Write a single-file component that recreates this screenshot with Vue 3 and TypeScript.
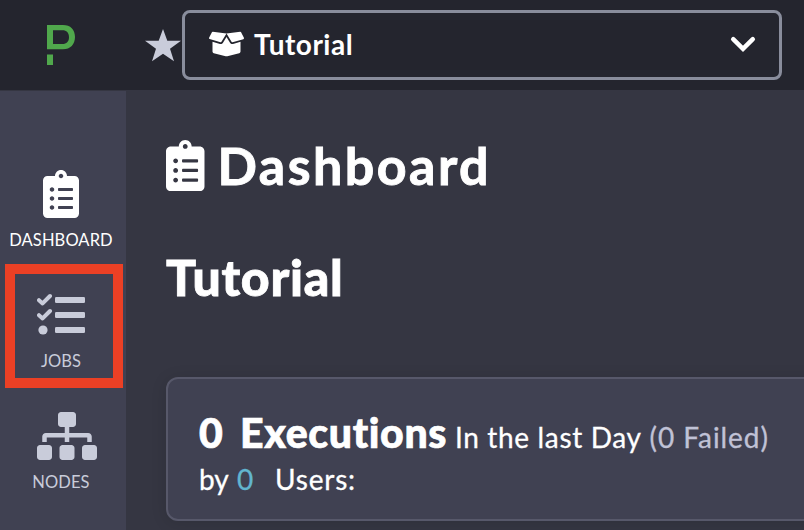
<script setup lang="ts">
interface Shape {
  viewBox: string
  path: string
}

const clipboard: Shape = {
  viewBox: '0 0 384 512',
  path: 'M336 64h-80c0-35.3-28.7-64-64-64s-64 28.7-64 64H48C21.5 64 0 85.5 0 112v352c0 26.5 21.5 48 48 48h288c26.5 0 48-21.5 48-48V112c0-26.5-21.5-48-48-48zM96 424c-13.3 0-24-10.7-24-24s10.7-24 24-24 24 10.7 24 24-10.7 24-24 24zm0-96c-13.3 0-24-10.7-24-24s10.7-24 24-24 24 10.7 24 24-10.7 24-24 24zm0-96c-13.3 0-24-10.7-24-24s10.7-24 24-24 24 10.7 24 24-10.7 24-24 24zm96-192c13.3 0 24 10.7 24 24s-10.7 24-24 24-24-10.7-24-24 10.7-24 24-24zm128 368c0 4.4-3.6 8-8 8H168c-4.4 0-8-3.6-8-8v-16c0-4.4 3.6-8 8-8h144c4.4 0 8 3.6 8 8v16zm0-96c0 4.4-3.6 8-8 8H168c-4.4 0-8-3.6-8-8v-16c0-4.4 3.6-8 8-8h144c4.4 0 8 3.6 8 8v16zm0-96c0 4.4-3.6 8-8 8H168c-4.4 0-8-3.6-8-8v-16c0-4.4 3.6-8 8-8h144c4.4 0 8 3.6 8 8v16z',
}

const sitemap: Shape = {
  viewBox: '0 0 640 512',
  path: 'M128 352H32c-17.67 0-32 14.33-32 32v96c0 17.67 14.33 32 32 32h96c17.67 0 32-14.33 32-32v-96c0-17.67-14.33-32-32-32zm-24-80h192v48h48v-48h192v48h48v-57.59c0-21.17-17.23-38.41-38.41-38.41H344v-64h40c17.67 0 32-14.33 32-32V32c0-17.67-14.33-32-32-32H256c-17.67 0-32 14.33-32 32v96c0 17.67 14.33 32 32 32h40v64H94.41C73.23 224 56 241.23 56 262.41V320h48v-48zm264 80h-96c-17.67 0-32 14.33-32 32v96c0 17.67 14.33 32 32 32h96c17.67 0 32-14.33 32-32v-96c0-17.67-14.33-32-32-32zm240 0h-96c-17.67 0-32 14.33-32 32v96c0 17.67 14.33 32 32 32h96c17.67 0 32-14.33 32-32v-96c0-17.67-14.33-32-32-32z',
}

const boxOpen: Shape = {
  viewBox: '0 0 640 512',
  path: 'M425.7 256c-16.9 0-32.8-9-41.4-23.4L320 126l-64.2 106.6c-8.7 14.5-24.6 23.5-41.5 23.5-4.5 0-9-.6-13.3-1.9L64 215v178c0 14.7 10 27.5 24.2 31l216.2 54.1c10.2 2.5 20.9 2.5 31 0L551.8 424c14.2-3.6 24.2-16.4 24.2-31V215l-137 39.1c-4.3 1.3-8.8 1.9-13.3 1.9zm212.6-112.2L586.8 41c-3.1-6.2-9.8-9.8-16.7-8.9L320 64l91.7 152.1c3.8 6.3 11.4 9.3 18.5 7.3l197.9-56.5c9.9-2.9 14.7-13.9 10.2-23.1zM53.2 41L1.7 143.8c-4.6 9.2.3 20.2 10.1 23l197.9 56.5c7.1 2 14.7-1 18.5-7.3L320 64 69.8 32.1c-6.9-.8-13.5 2.7-16.6 8.9z',
}

const project = 'Tutorial'
const executions = 0
const failed = 0
const users = 0
</script>

<template>
  <div class="app">
    <header class="topbar">
      <svg class="logo" viewBox="0 0 28 40">
        <path fill-rule="evenodd" d="M0 0H16C23.500 0 28 4.700 28 12S23.500 24.300 16 24.300H0ZM6 5.300V19H15.500C19.500 19 22 16.500 22 12.200S19.500 5.300 15.500 5.300Z" />
        <rect x="0" y="29.500" width="6" height="10.500" />
      </svg>
      <svg class="star" viewBox="0 0 36 33">
        <path d="M18 0L22.300 11.700H36L25 19.800L29 32.300L18 24.800L7 32.300L11 19.800L0 11.700H13.700Z" />
      </svg>
      <button class="select" type="button">
        <svg class="box-icon" :viewBox="boxOpen.viewBox"><path :d="boxOpen.path" /></svg>
        <span class="select-text">{{ project }}</span>
        <svg class="chevron" viewBox="0 0 26 18"><path d="M3.200 3.200L13 12.800L22.800 3.200" /></svg>
      </button>
    </header>
    <div class="body">
      <nav class="sidebar">
        <a class="item dashboard">
          <svg class="clip" :viewBox="clipboard.viewBox"><path :d="clipboard.path" /></svg>
          <span class="label">DASHBOARD</span>
        </a>
        <a class="item jobs">
          <svg class="tasks" viewBox="0 0 48 42">
            <path class="tick" d="M2 7.200L5.600 10.400L13 3" />
            <path class="tick" d="M2 22.200L5.600 25.400L13 18" />
            <circle cx="6" cy="37" r="4.600" />
            <rect x="18" y="4" width="30" height="6" rx="1.300" />
            <rect x="18" y="19" width="30" height="6" rx="1.300" />
            <rect x="18" y="34" width="30" height="6" rx="1.300" />
          </svg>
          <span class="label">JOBS</span>
        </a>
        <a class="item nodes">
          <svg class="tree" :viewBox="sitemap.viewBox"><path :d="sitemap.path" /></svg>
          <span class="label">NODES</span>
        </a>
      </nav>
      <main class="content">
        <h1 class="title">
          <svg class="title-icon" :viewBox="clipboard.viewBox"><path :d="clipboard.path" /></svg>
          <span>Dashboard</span>
        </h1>
        <h2 class="project">{{ project }}</h2>
        <section class="card">
          <div class="line first">
            <span class="count">{{ executions }}</span>
            <span class="executions">Executions</span>
            <span class="period">In the last Day</span>
            <span class="failed">({{ failed }} Failed)</span>
          </div>
          <div class="line second">
            <span class="by">by</span>
            <span class="users-count">{{ users }}</span>
            <span class="users">Users:</span>
          </div>
        </section>
      </main>
    </div>
  </div>
</template>

<style>
body {
  overflow: hidden;
  background: #353642;
}
</style>

<style scoped>
.app {
  display: flex;
  flex-direction: column;
  width: 804px;
  height: 530px;
  overflow: hidden;
  font-family: Lato, "Open Sans", sans-serif;
  font-variant-ligatures: none;
  color: #fff;
  background: #353642;
}
svg {
  display: block;
  flex: none;
  fill: currentColor;
}
.topbar {
  display: flex;
  flex: none;
  height: 90px;
  box-sizing: border-box;
  padding: 10px 0 0 47px;
  background: #24252e;
}
.logo {
  width: 28px;
  height: 40px;
  margin-top: 15px;
  color: #50a84c;
}
.star {
  width: 36px;
  height: 33px;
  margin: 19px 1px 0 70px;
  color: #c9ccda;
}
.select {
  display: flex;
  align-items: flex-start;
  width: 600px;
  height: 70px;
  box-sizing: border-box;
  padding: 0 23px 0 24px;
  border: 3px solid #898d9c;
  border-radius: 8px;
  color: #fff;
  background: #24252e;
  font-family: inherit;
}
.box-icon {
  width: 35px;
  height: 28px;
  margin-top: 17px;
}
.select-text {
  margin-left: 10px;
  font-size: 28px;
  line-height: 63px;
  font-weight: 700;
  letter-spacing: 0.500px;
}
.chevron {
  width: 26px;
  height: 18px;
  margin: 23px 0 0 auto;
}
.chevron path {
  fill: none;
  stroke: currentColor;
  stroke-width: 4.500;
  stroke-linecap: round;
}
.body {
  display: flex;
  flex: 1;
  min-height: 0;
}
.sidebar {
  display: flex;
  flex-direction: column;
  flex: none;
  width: 126px;
  box-sizing: border-box;
  border-top: 1.500px solid #353642;
  background: #404152;
}
.item {
  display: flex;
  flex-direction: column;
  box-sizing: border-box;
  flex: none;
  color: #c9ccda;
}
.label {
  width: 112px;
  text-align: center;
  font-size: 16.500px;
  line-height: 22px;
  letter-spacing: 0.100px;
}
.dashboard {
  height: 173px;
  padding: 79px 0 0 5px;
  color: #fff;
}
.clip {
  width: 36px;
  height: 48px;
  margin: 0 0 11px 38px;
}
.jobs {
  height: 124px;
  margin: 0 3px 0 5px;
  border: 10px solid #eb4025;
}
.tasks {
  width: 48px;
  height: 42px;
  margin: 19px 0 15px 22px;
}
.tick {
  fill: none;
  stroke: currentColor;
  stroke-width: 4;
  stroke-linecap: round;
  stroke-linejoin: round;
}
.jobs .label {
  width: 92px;
}
.nodes {
  padding: 24px 0 0 5px;
}
.tree {
  width: 60px;
  height: 48px;
  margin: 0 0 11px 32px;
}
.content {
  flex: 1;
  min-width: 0;
  padding: 50px 0 0 40px;
}
.title {
  display: flex;
  height: 60px;
  margin: 0;
  font-size: 52px;
  line-height: 50px;
  font-weight: 700;
  letter-spacing: 2.450px;
  -webkit-text-stroke: 0.900px #fff;
}
.title-icon {
  width: 38.500px;
  height: 51.300px;
  margin-right: 13px;
}
.project {
  height: 60px;
  margin: 51px 0 0;
  font-size: 50px;
  line-height: 52px;
  font-weight: 900;
  letter-spacing: 0.700px;
  -webkit-text-stroke: 0.800px #fff;
}
.card {
  width: 700px;
  height: 144px;
  box-sizing: border-box;
  margin-top: 66px;
  padding: 30px 0 0 31px;
  border: 2px solid #57586a;
  border-radius: 12px;
  background: #404152;
  box-shadow: 0 2px 16px rgba(0, 0, 0, 0.12);
}
.line {
  display: flex;
  align-items: baseline;
  white-space: nowrap;
  font-size: 28px;
  line-height: 48px;
  -webkit-text-stroke: 0.300px currentColor;
}
.second {
  line-height: 36px;
}
.count {
  width: 41px;
  font-size: 41px;
  font-weight: 900;
  -webkit-text-stroke: 0.700px #fff;
}
.executions {
  width: 215px;
  font-size: 41px;
  font-weight: 900;
  letter-spacing: 0.650px;
  -webkit-text-stroke: 0.700px #fff;
}
.period {
  width: 194.500px;
  letter-spacing: 0.650px;
}
.failed {
  color: #c0c2d6;
  letter-spacing: 0.950px;
}
.by {
  width: 38px;
}
.users-count {
  width: 38px;
  color: #62b5cf;
}
.users {
  letter-spacing: 0.800px;
}
</style>
